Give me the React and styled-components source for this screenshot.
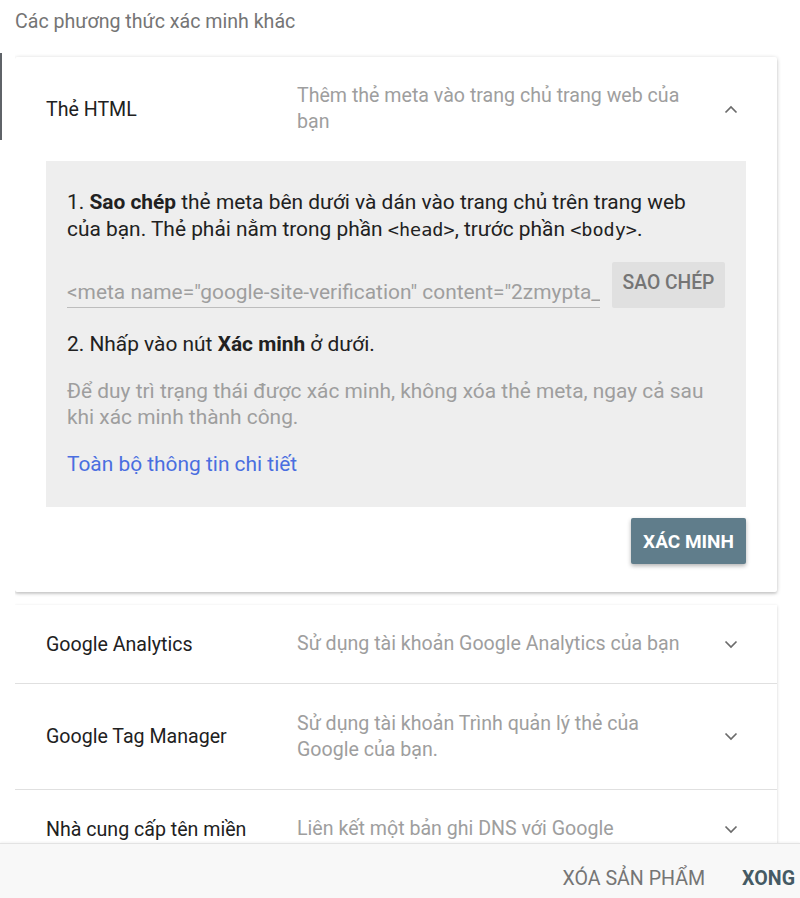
import React from "react";
import styled, { createGlobalStyle } from "styled-components";

const GlobalStyle = createGlobalStyle`
  html, body {
    margin: 0;
    padding: 0;
    background: #ffffff;
  }
  body {
    font-family: Roboto, "Liberation Sans", Arial, sans-serif;
    color: #212121;
  }
`;

const methods = [
  {
    title: "Google Analytics",
    desc: "Sử dụng tài khoản Google Analytics của bạn",
    height: 78,
  },
  {
    title: "Google Tag Manager",
    desc: "Sử dụng tài khoản Trình quản lý thẻ của Google của bạn.",
    height: 105,
  },
  {
    title: "Nhà cung cấp tên miền",
    desc: "Liên kết một bản ghi DNS với Google",
    height: 78,
  },
];

const Chevron = ({ up }) => (
  <svg width="14" height="9" viewBox="0 0 14 9">
    <polyline
      points={up ? "1.5,7.5 7,2 12.5,7.5" : "1.5,1.5 7,7 12.5,1.5"}
      fill="none"
      stroke="#6b6b6b"
      strokeWidth="1.7"
    />
  </svg>
);

const App = () => {
  return (
    <Page>
      <GlobalStyle />
      <Body>
        <Backdrop>
          <BackdropMark />
        </Backdrop>
        <Scroll>
          <Heading>Các phương thức xác minh khác</Heading>

          <Card>
            <Row $height={104}>
              <Title>Thẻ HTML</Title>
              <Desc>Thêm thẻ meta vào trang chủ trang web của bạn</Desc>
              <Toggle>
                <Chevron up />
              </Toggle>
            </Row>

            <Panel>
              <Para>
                1. <b>Sao chép</b> thẻ meta bên dưới và dán vào trang chủ trên
                trang web của bạn. Thẻ phải nằm trong phần{" "}
                <Code>&lt;head&gt;</Code>, trước phần <Code>&lt;body&gt;</Code>.
              </Para>

              <CopyRow>
                <MetaField>
                  &lt;meta name="google-site-verification" content="2zmypta_
                </MetaField>
                <CopyButton>SAO CHÉP</CopyButton>
              </CopyRow>

              <Para>
                2. Nhấp vào nút <b>Xác minh</b> ở dưới.
              </Para>

              <Note>
                Để duy trì trạng thái được xác minh, không xóa thẻ meta, ngay cả
                sau khi xác minh thành công.
              </Note>

              <DetailLink href="#">Toàn bộ thông tin chi tiết</DetailLink>
            </Panel>

            <Actions>
              <VerifyButton>XÁC MINH</VerifyButton>
            </Actions>
          </Card>

          <ListCard>
            {methods.map((m) => (
              <Row key={m.title} $height={m.height} $divider>
                <Title>{m.title}</Title>
                <Desc>{m.desc}</Desc>
                <Toggle>
                  <Chevron />
                </Toggle>
              </Row>
            ))}
          </ListCard>
        </Scroll>
      </Body>

      <Footer>
        <FooterButton>XÓA SẢN PHẨM</FooterButton>
        <FooterButton $primary>XONG</FooterButton>
      </Footer>
    </Page>
  );
};

const Page = styled.div`
  width: 800px;
  height: 898px;
  display: flex;
  flex-direction: column;
  overflow: hidden;
  background: #ffffff;
`;

const Body = styled.div`
  flex: 1;
  display: flex;
  overflow: hidden;
`;

const Backdrop = styled.div`
  width: 15px;
  flex-shrink: 0;
`;

const BackdropMark = styled.div`
  width: 2px;
  height: 87px;
  margin-top: 53px;
  background: #5f6368;
`;

const Scroll = styled.div`
  flex: 1;
  overflow: hidden;
  padding-right: 23px;
`;

const Heading = styled.div`
  font-size: 19.6px;
  color: #757575;
  line-height: 24px;
  padding-top: 10px;
  height: 47px;
`;

const Card = styled.div`
  background: #ffffff;
  border-radius: 2px;
  box-shadow: 0 1px 4px rgba(0, 0, 0, 0.22), 0 2px 2px rgba(0, 0, 0, 0.08);
  padding-bottom: 28px;
`;

const ListCard = styled.div`
  margin-top: 13px;
  background: #ffffff;
  box-shadow: 0 1px 3px rgba(0, 0, 0, 0.18);
`;

const Row = styled.div`
  display: grid;
  grid-template-columns: 251px 1fr 30px;
  align-items: center;
  height: ${({ $height }) => $height}px;
  padding: 0 31px;
  border-bottom: ${({ $divider }) => ($divider ? "1px solid #e0e0e0" : "none")};
`;

const Title = styled.div`
  font-size: 19.6px;
  color: #212121;
`;

const Desc = styled.div`
  font-size: 19.6px;
  line-height: 26px;
  color: #9e9e9e;
  padding-right: 16px;
`;

const Toggle = styled.div`
  display: flex;
  justify-content: center;
  align-items: center;
`;

const Panel = styled.div`
  background: #eeeeee;
  margin: 0 31px;
  padding: 28px 31px 30px 21px;
`;

const Para = styled.p`
  margin: 0;
  font-size: 20.9px;
  line-height: 27px;
  color: #212121;
  b {
    font-weight: 700;
  }
`;

const Code = styled.code`
  font-family: "DejaVu Sans Mono", "Liberation Mono", monospace;
  font-size: 18.5px;
  line-height: 1;
`;

const CopyRow = styled.div`
  display: flex;
  align-items: flex-end;
  gap: 12px;
  margin: 19px -10px 23px 0;
`;

const MetaField = styled.div`
  flex: 1;
  font-size: 20.9px;
  color: #9e9e9e;
  white-space: nowrap;
  overflow: hidden;
  border-bottom: 1px solid #bdbdbd;
  padding-bottom: 3px;
  line-height: 24px;
`;

const CopyButton = styled.button`
  width: 113px;
  height: 46px;
  flex-shrink: 0;
  border: none;
  border-radius: 2px;
  background: #e0e0e0;
  color: #757575;
  font-family: Roboto, "Liberation Sans", sans-serif;
  font-size: 19.3px;
  font-weight: 500;
  padding: 0 0 6px;
`;

const Note = styled.p`
  margin: 20px 0 21px;
  font-size: 20.9px;
  line-height: 26px;
  color: #9e9e9e;
`;

const DetailLink = styled.a`
  display: block;
  font-size: 20.9px;
  line-height: 26px;
  color: #4a6ee0;
  text-decoration: none;
`;

const Actions = styled.div`
  display: flex;
  justify-content: flex-end;
  padding: 11px 31px 0;
`;

const VerifyButton = styled.button`
  width: 115px;
  height: 46px;
  border: none;
  border-radius: 2px;
  background: #607d8b;
  color: #ffffff;
  font-family: Roboto, "Liberation Sans", sans-serif;
  font-size: 19px;
  font-weight: 700;
  padding: 0;
  box-shadow: 0 2px 4px rgba(0, 0, 0, 0.3);
`;

const Footer = styled.div`
  height: 55px;
  flex-shrink: 0;
  display: flex;
  justify-content: flex-end;
  align-items: flex-start;
  gap: 37px;
  padding: 24px 5px 0 0;
  background: #f8f8f8;
  border-top: 1px solid #e3e3e3;
  box-shadow: 0 -1px 2px rgba(0, 0, 0, 0.05);
  box-sizing: border-box;
`;

const FooterButton = styled.button`
  border: none;
  background: transparent;
  padding: 0;
  font-family: Roboto, "Liberation Sans", sans-serif;
  font-size: 19.6px;
  font-weight: ${({ $primary }) => ($primary ? 700 : 400)};
  color: ${({ $primary }) => ($primary ? "#455a64" : "#757575")};
  line-height: 22px;
`;

export default App;
